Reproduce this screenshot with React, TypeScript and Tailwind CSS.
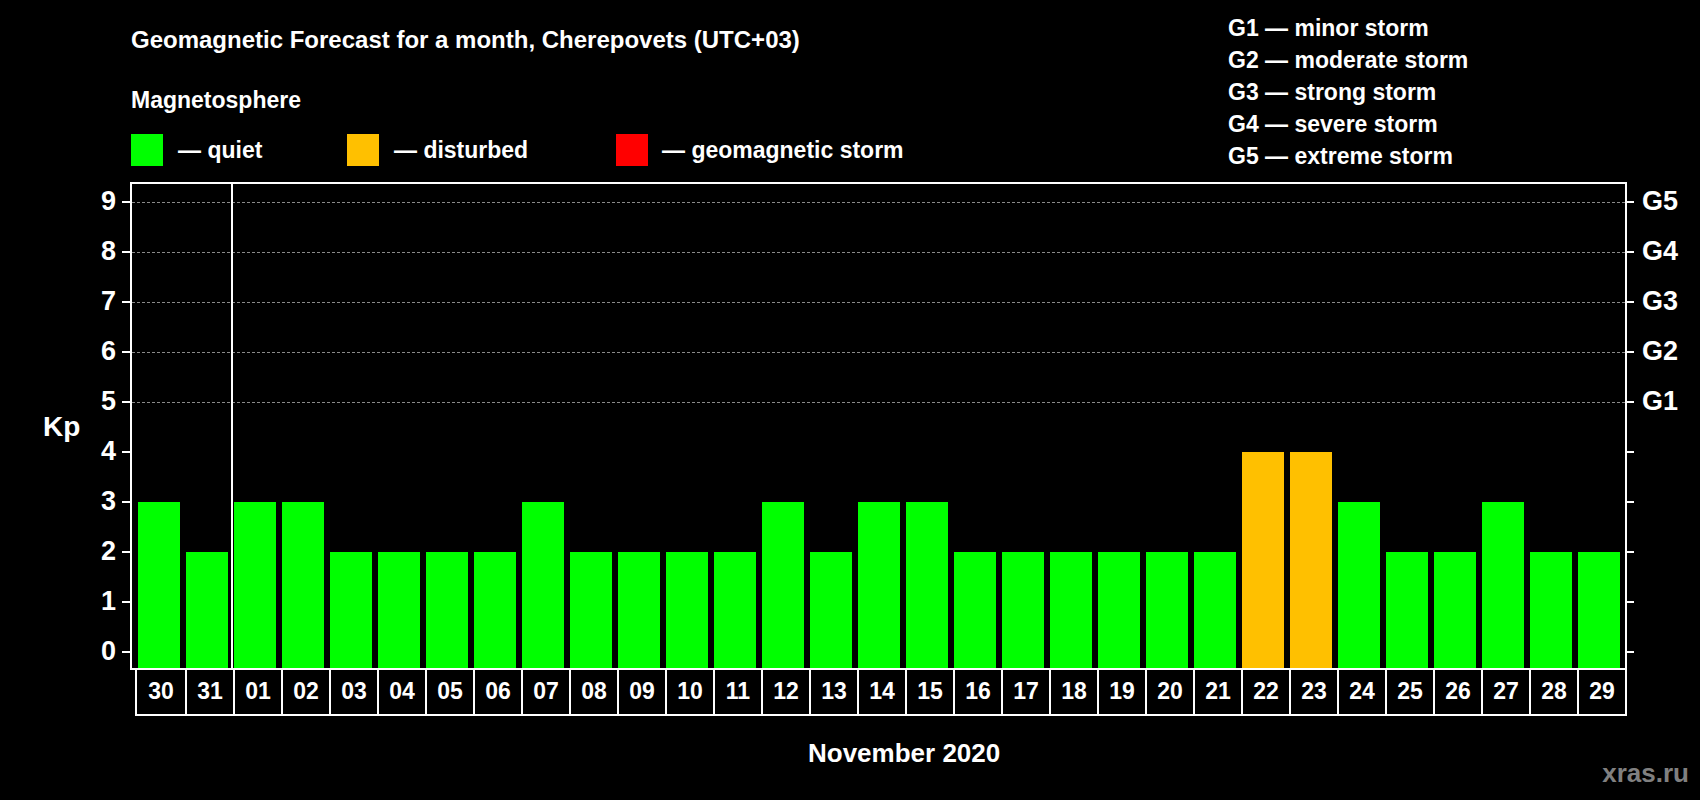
import React from "react";

const days = ["30","31","01","02","03","04","05","06","07","08","09","10","11","12","13","14","15","16","17","18","19","20","21","22","23","24","25","26","27","28","29"];
const vals = [3,2,3,3,2,2,2,2,3,2,2,2,2,3,2,3,3,2,2,2,2,2,2,4,4,3,2,2,3,2,2];

export default function App() {
  const font = { fontFamily: '"Liberation Sans", Arial, sans-serif' };
  return (
    <div className="relative w-[1700px] h-[800px] bg-black text-white font-bold overflow-hidden" style={font}>
      {/* Header */}
      <div className="absolute left-[131px] top-[24px] text-[24px] leading-[32px]">Geomagnetic Forecast for a month, Cherepovets (UTC+03)</div>
      <div className="absolute left-[131px] top-[86px] text-[23px] leading-[28px]">Magnetosphere</div>
      <div className="absolute left-[131px] top-[134px] flex items-center text-[23px] leading-[32px]">
        <div className="flex items-center w-[216px]">
          <div className="w-[32px] h-[32px] bg-[#00ff00]" />
          <span className="ml-[15px]">— quiet</span>
        </div>
        <div className="flex items-center w-[269px]">
          <div className="w-[32px] h-[32px] bg-[#ffc000]" />
          <span className="ml-[15px]">— disturbed</span>
        </div>
        <div className="flex items-center">
          <div className="w-[32px] h-[32px] bg-[#ff0000]" />
          <span className="ml-[14px]">— geomagnetic storm</span>
        </div>
      </div>
      <div className="absolute left-[1228px] top-[12px] flex flex-col text-[23px] leading-[32px]">
        <span>G1 — minor storm</span>
        <span>G2 — moderate storm</span>
        <span>G3 — strong storm</span>
        <span>G4 — severe storm</span>
        <span>G5 — extreme storm</span>
      </div>

      {/* Kp label */}
      <div className="absolute left-[43px] top-[410px] text-[28px] leading-[34px]">Kp</div>

      {/* Y axis labels and ticks */}
      {[0,1,2,3,4,5,6,7,8,9].map((v) => (
        <React.Fragment key={v}>
          <div className="absolute left-[60px] w-[56px] text-right text-[27px] leading-[30px]" style={{ top: 652 - v * 50 - 16 }}>{v}</div>
          <div className="absolute left-[122px] w-[9px] h-[2px] bg-white" style={{ top: 651 - v * 50 }} />
          <div className="absolute left-[1625px] w-[9px] h-[2px] bg-white" style={{ top: 651 - v * 50 }} />
        </React.Fragment>
      ))}
      {["G1","G2","G3","G4","G5"].map((g, i) => (
        <div key={g} className="absolute left-[1642px] text-[27px] leading-[30px]" style={{ top: 652 - (i + 5) * 50 - 16 }}>{g}</div>
      ))}

      {/* Chart frame */}
      <div className="absolute left-[130px] top-[182px] w-[1497px] h-[488px] border-2 border-white">
        {[5,6,7,8,9].map((v) => (
          <div key={v} className="absolute left-0 right-0 border-t border-dashed border-[#8a8a8a]" style={{ top: 652 - v * 50 - 184 }} />
        ))}
        <div className="absolute top-0 bottom-0 left-[99px] w-[2px] bg-white" />
        <div className="absolute left-[6px] bottom-0 flex items-end gap-[6px]">
          {vals.map((v, i) => (
            <div key={i} className={`w-[42px] ${v >= 4 ? "bg-[#ffc000]" : "bg-[#00ff00]"}`} style={{ height: 16 + v * 50 }} />
          ))}
        </div>
      </div>

      {/* Date row */}
      <div className="absolute left-[135px] top-[668px] flex border-2 border-t-0 border-white">
        {days.map((d, i) => (
          <div key={i} className={`w-[48px] h-[46px] flex items-center justify-center text-[23px] ${i > 0 ? "border-l-2 border-white" : ""}`}>{d}</div>
        ))}
      </div>

      <div className="absolute left-[808px] top-[737px] text-[26px] leading-[32px]">November 2020</div>
      <div className="absolute right-[11px] top-[757px] text-[26px] leading-[32px] text-[#808080]">xras.ru</div>
    </div>
  );
}
